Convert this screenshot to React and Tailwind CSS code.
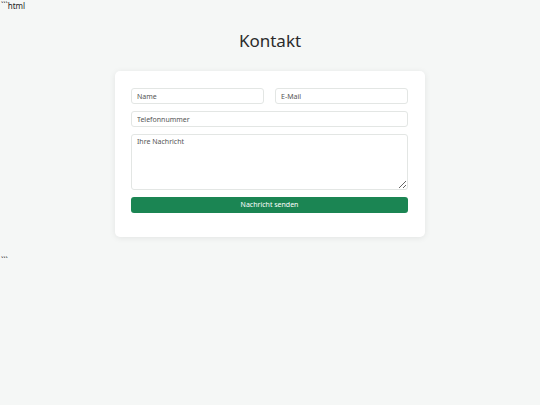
export default function App() {
  return (
    <div className="min-h-screen bg-[#f5f7f6] font-['Noto_Sans',sans-serif] text-[#333]">
      <p className="text-[8px] leading-[10px] pl-px pt-px text-[#222]">```html</p>
      <h1 className="text-[17px] leading-[24px] text-center mt-[18px] text-[#2b2b2b]">Kontakt</h1>
      <div className="mx-auto mt-[18px] w-[310px] bg-white rounded-[5px] shadow-[0_1px_6px_rgba(0,0,0,0.08)] pl-[16px] pr-[17px] pt-[17px] pb-[24px]">
        <form className="flex flex-col gap-[7px]">
          <div className="flex gap-[11px]">
            <input
              placeholder="Name"
              className="flex-1 min-w-0 h-[16px] border border-[#e3e6e4] rounded-[3px] px-[5px] text-[7px] placeholder:text-[#555] outline-none"
            />
            <input
              placeholder="E-Mail"
              className="flex-1 min-w-0 h-[16px] border border-[#e3e6e4] rounded-[3px] px-[5px] text-[7px] placeholder:text-[#555] outline-none"
            />
          </div>
          <input
            placeholder="Telefonnummer"
            className="h-[16px] border border-[#e3e6e4] rounded-[3px] px-[5px] text-[7px] placeholder:text-[#555] outline-none"
          />
          <textarea
            placeholder="Ihre Nachricht"
            className="h-[56px] border border-[#e3e6e4] rounded-[3px] px-[5px] py-[2px] text-[7px] placeholder:text-[#555] outline-none resize-y"
          />
          <button
            type="button"
            className="h-[16px] bg-[#1b8553] text-white text-[7px] rounded-[3px]"
          >
            Nachricht senden
          </button>
        </form>
      </div>
      <p className="text-[8px] leading-[10px] pl-px mt-[19px] text-[#222]">```</p>
    </div>
  );
}
